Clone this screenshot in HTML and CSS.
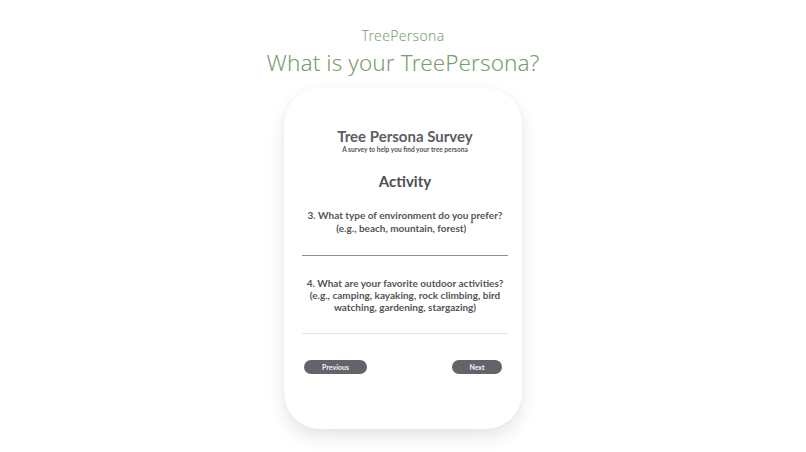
FILE: index.html
```html
<!DOCTYPE html>
<html>
<head>
<meta charset="utf-8">
<link rel="stylesheet" href="styles.css">
</head>
<body>
<header class="hero">
  <div class="brand">TreePersona</div>
  <h1 class="headline">What is your TreePersona?</h1>
</header>
<main class="card">
  <h2 class="survey-title">Tree Persona Survey</h2>
  <p class="survey-sub">A survey to help you find your tree persona</p>
  <h3 class="section">Activity</h3>
  <div class="question q3">
    <p class="q-text">3. What type of environment do you prefer?<br>(e.g., beach, mountain, forest)<span class="req">*</span></p>
    <div class="answer dark"></div>
  </div>
  <div class="question q4">
    <p class="q-text">4. What are your favorite outdoor activities? (e.g., camping, kayaking, rock climbing, bird watching, gardening, stargazing)</p>
    <div class="answer light"></div>
  </div>
  <div class="nav">
    <button class="btn prev">Previous</button>
    <button class="btn next">Next</button>
  </div>
</main>
</body>
</html>
```
FILE: styles.css
```css
html, body {
  margin: 0;
  padding: 0;
  background: #ffffff;
}
body {
  width: 806px;
  height: 452px;
  overflow: hidden;
  display: flex;
  flex-direction: column;
  align-items: center;
}
.hero {
  display: flex;
  flex-direction: column;
  align-items: center;
  padding-top: 26px;
  font-family: "Noto Sans", sans-serif;
  color: #7a9c70;
}
.brand {
  font-size: 14px;
  font-weight: 300;
  line-height: 20px;
  letter-spacing: 0.3px;
}
.headline {
  margin: 0;
  font-size: 22.5px;
  font-weight: 300;
  line-height: 34px;
  letter-spacing: 0.1px;
}
.card {
  margin-top: 8px;
  width: 238px;
  height: 341px;
  box-sizing: border-box;
  background: #fff;
  border-radius: 36px;
  box-shadow: 0 8px 18px rgba(0,0,0,0.10), 0 0 4px rgba(0,0,0,0.03);
  padding: 39px 14px 0 18px;
  display: flex;
  flex-direction: column;
  align-items: center;
  font-family: "Lato", sans-serif;
  color: #555459;
}
.survey-title {
  margin: 0;
  font-size: 15px;
  font-weight: 700;
  line-height: 18px;
  color: #5d5c62;
}
.survey-sub {
  margin: 0;
  font-size: 6.6px;
  font-weight: 700;
  line-height: 8px;
  color: #555;
}
.section {
  margin: 18px 0 0;
  font-size: 15px;
  font-weight: 700;
  line-height: 20px;
  color: #4e4d52;
}
.question {
  width: 100%;
  display: flex;
  flex-direction: column;
  align-items: center;
}
.q3 { margin-top: 18px; }
.q4 { margin-top: 22px; }
.q-text {
  margin: 0;
  font-size: 10px;
  font-weight: 700;
  text-align: center;
  color: #555459;
}
.q3 .q-text { line-height: 13px; }
.q4 .q-text { line-height: 11.8px; }
.req {
  display: inline-block;
  vertical-align: top;
  margin-left: 4px;
  margin-top: -2px;
  font-size: 8px;
  line-height: 8px;
  color: #333;
}
.answer {
  width: 100%;
  height: 1px;
}
.answer.dark { background: #8f8f8f; margin-top: 20px; }
.answer.light { background: #e4e4e4; margin-top: 20px; }
.nav {
  width: 100%;
  margin-top: 26px;
  display: flex;
  justify-content: space-between;
  padding: 0 6px 0 2px;
  box-sizing: border-box;
}
.btn {
  height: 14px;
  border: none;
  border-radius: 7px;
  background: #64636a;
  color: #f4f4f4;
  font-family: "Lato", sans-serif;
  font-size: 7px;
  font-weight: 700;
  padding: 0;
}
.prev { width: 63px; }
.next { width: 50px; }
```
